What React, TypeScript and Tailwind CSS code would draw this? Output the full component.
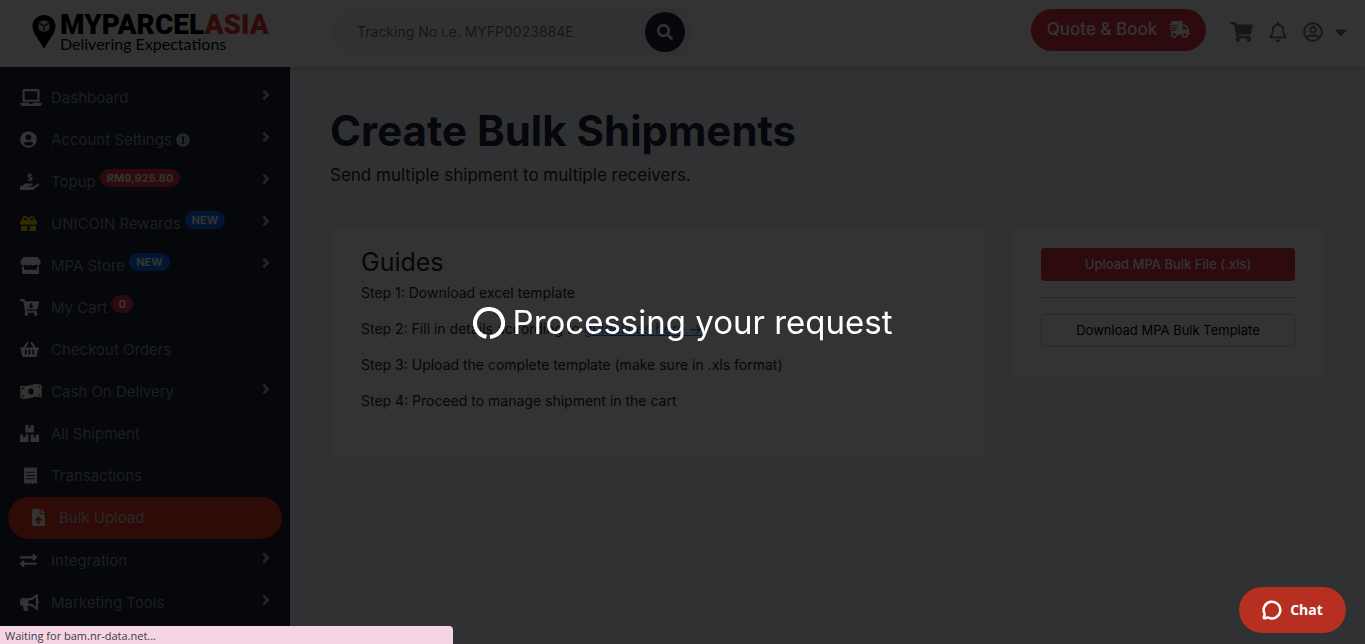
import type { ReactNode } from "react";
import clsx from "clsx";
import { MessageCircle } from "lucide-react";
import {
  FaAngleRight,
  FaBoxes,
  FaBullhorn,
  FaCaretDown,
  FaCartArrowDown,
  FaExchangeAlt,
  FaExclamationCircle,
  FaFileUpload,
  FaGift,
  FaHandHoldingUsd,
  FaLaptop,
  FaMoneyBillWave,
  FaReceipt,
  FaRegBell,
  FaRegUserCircle,
  FaSearch,
  FaShippingFast,
  FaShoppingBasket,
  FaShoppingCart,
  FaStore,
  FaUserCircle,
} from "react-icons/fa";

type MenuItem = {
  label: string;
  icon: ReactNode;
  badge?: string;
  badgeColor?: string;
  alert?: boolean;
  arrow?: boolean;
  active?: boolean;
};

const menu: MenuItem[] = [
  { label: "Dashboard", icon: <FaLaptop className="w-[22px]" />, arrow: true },
  { label: "Account Settings", icon: <FaUserCircle />, alert: true, arrow: true },
  {
    label: "Topup",
    icon: <FaHandHoldingUsd className="w-[19px]" />,
    badge: "RM9,925.80",
    badgeColor: "bg-[#dc3545]",
    arrow: true,
  },
  {
    label: "UNICOIN Rewards",
    icon: <FaGift className="text-[#ffd700]" />,
    badge: "NEW",
    badgeColor: "bg-[#0d6efd]",
    arrow: true,
  },
  {
    label: "MPA Store",
    icon: <FaStore className="w-[21px]" />,
    badge: "NEW",
    badgeColor: "bg-[#0d6efd]",
    arrow: true,
  },
  {
    label: "My Cart",
    icon: <FaCartArrowDown className="w-[19px]" />,
    badge: "0",
    badgeColor: "bg-[#dc3545]",
  },
  { label: "Checkout Orders", icon: <FaShoppingBasket className="w-[19px]" /> },
  { label: "Cash On Delivery", icon: <FaMoneyBillWave className="w-[22px]" />, arrow: true },
  { label: "All Shipment", icon: <FaBoxes className="w-[19px]" /> },
  { label: "Transactions", icon: <FaReceipt className="ml-1 w-[13px]" /> },
  { label: "Bulk Upload", icon: <FaFileUpload className="ml-1 w-[13px]" />, active: true },
  { label: "Integration", icon: <FaExchangeAlt />, arrow: true },
  { label: "Marketing Tools", icon: <FaBullhorn className="w-[19px]" />, arrow: true },
];

function Logo() {
  return (
    <a href="#" className="flex items-center gap-1 text-black">
      <svg viewBox="0 0 24 34" className="h-[34px] w-6" aria-hidden="true">
        <path
          d="M12 0C5.200 0 .5 5 .5 11.300c0 7.400 7.500 14.500 11.500 22.700 4-8.200 11.500-15.300 11.500-22.700C23.500 5 18.800 0 12 0z"
          fill="currentColor"
        />
        <path
          d="M12 5l5.500 2.500v7L12 17.500 6.500 14.500v-7z"
          fill="#ccc"
        />
        <path
          d="M6.500 8L12 10.800 17.500 8M12 10.800v6.700"
          fill="none"
          stroke="#000"
          strokeWidth="1.200"
        />
      </svg>
      <span className="flex flex-col pt-[3px]">
        <span className="font-[Roboto] text-[28px] leading-[22px] font-black">
          MYPARCEL<span className="text-[#e5382b]">ASIA</span>
        </span>
        <span className="font-[Lato] text-base leading-4">Delivering Expectations</span>
      </span>
    </a>
  );
}

function Header() {
  return (
    <header className="relative flex h-[67px] items-center bg-white pr-[18px] pb-1 pl-8 shadow-md">
      <div className="w-[301px]">
        <Logo />
      </div>
      <form className="flex h-[52px] w-[360px] items-center rounded-full bg-[#f1f5fb] pr-2 pl-6">
        <input
          type="text"
          aria-label="Tracking number"
          placeholder="Tracking No i.e. MYFP0023884E"
          className="min-w-0 flex-1 bg-transparent text-sm outline-none placeholder:text-[#6c757d]"
        />
        <button
          type="button"
          aria-label="Search"
          className="flex size-10 items-center justify-center rounded-full bg-[#192337] text-base text-white"
        >
          <FaSearch />
        </button>
      </form>
      <div className="ml-auto flex items-center gap-4 text-xl text-[#6c757d]">
        <button
          type="button"
          className="mr-2 mb-1 flex h-[42px] w-[175px] items-center justify-center gap-3 rounded-full bg-[#dc3545] text-[17px] font-medium text-white"
        >
          Quote &amp; Book
          <FaShippingFast className="w-[21px]" />
        </button>
        <a href="#" aria-label="Cart">
          <FaShoppingCart className="w-[23px]" />
        </a>
        <a href="#" aria-label="Notifications">
          <FaRegBell className="w-[18px]" />
        </a>
        <button type="button" aria-label="Account menu" className="flex items-center gap-3">
          <FaRegUserCircle />
          <FaCaretDown className="w-3" />
        </button>
      </div>
    </header>
  );
}

function Sidebar() {
  return (
    <nav className="w-[290px] shrink-0 bg-[#192337] pt-[10px]">
      <ul>
        {menu.map((item) => (
          <li key={item.label}>
            <a
              href="#"
              className={clsx(
                "flex h-[42px] items-center pr-5 pl-5 text-[15px]",
                item.active
                  ? "mx-2 mb-px rounded-full bg-[#e8382a] text-[#c3c9cf]"
                  : "text-[#8a989d]"
              )}
            >
              <span className="mb-0.5 w-[31px] text-[17px] text-white">{item.icon}</span>
              {item.label}
              {item.alert && <FaExclamationCircle className="ml-1 text-sm text-[#a9c2b8]" />}
              {item.badge && (
                <span
                  className={clsx(
                    "mb-2 ml-1 rounded-full px-[7px] text-[11px] leading-[18px] font-bold text-white",
                    item.badgeColor
                  )}
                >
                  {item.badge}
                </span>
              )}
              {item.arrow && (
                <FaAngleRight className="mb-1.5 ml-auto w-2 text-base text-[#b4bcc4]" />
              )}
            </a>
          </li>
        ))}
      </ul>
    </nav>
  );
}

function Guides() {
  return (
    <section className="col-span-8 rounded-md border border-[#dadfe5] bg-white px-[30px] pt-5 pb-[30px] text-sm leading-5 text-[#212529]">
      <h2 className="mb-[7px] text-[25px] leading-7">Guides</h2>
      <p className="mb-4">Step 1: Download excel template</p>
      <p className="mb-4">
        Step 2: Fill in details according to{" "}
        <a href="#" className="text-[#0d6efd] underline">
          guidelines here →
        </a>
      </p>
      <p className="mb-4">Step 3: Upload the complete template (make sure in .xls format)</p>
      <p className="mb-4">Step 4: Proceed to manage shipment in the cart</p>
    </section>
  );
}

function FileActions() {
  return (
    <section className="col-span-4 self-start rounded-md border border-[#dadfe5] bg-white px-[30px] pt-5 pb-[30px] text-[13px]">
      <button type="button" className="h-[33px] w-full rounded bg-[#dc3545] font-medium text-white">
        Upload MPA Bulk File (.xls)
      </button>
      <hr className="my-4 border-[#bfbfbf]" />
      <button type="button" className="h-[33px] w-full rounded border border-[#c4c8cc] text-black">
        Download MPA Bulk Template
      </button>
    </section>
  );
}

function LoadingOverlay() {
  return (
    <div
      role="status"
      className="fixed inset-0 flex items-center justify-center gap-2 bg-black/80 pt-0.5 text-[33px] text-white"
    >
      <svg viewBox="0 0 32 32" className="size-8" aria-hidden="true">
        <path
          d="M17 29.960A14 14 0 1 0 13.400 29.750"
          fill="none"
          stroke="currentColor"
          strokeWidth="4"
        />
      </svg>
      Processing your request
    </div>
  );
}

export default function App() {
  return (
    <div className="flex min-h-screen flex-col bg-[#f1f5fb] font-[Inter,sans-serif]">
      <Header />
      <div className="flex flex-1">
        <Sidebar />
        <main className="min-w-0 flex-1 pt-10 pr-[39px] pl-10">
          <h1 className="text-[42px] leading-12 font-bold text-[#192337]">
            Create Bulk Shipments
          </h1>
          <p className="mt-2 text-[17px] leading-6 text-[#212529]">
            Send multiple shipment to multiple receivers.
          </p>
          <div className="mt-10 grid grid-cols-12 gap-6">
            <Guides />
            <FileActions />
          </div>
        </main>
      </div>
      <LoadingOverlay />
      <button
        type="button"
        className="fixed right-[19px] bottom-[11px] flex h-[46px] w-[107px] items-center justify-center gap-2 rounded-full bg-[#b72f20] font-['Open_Sans',sans-serif] text-sm font-bold text-white"
      >
        <MessageCircle className="size-5" strokeWidth={3} />
        Chat
      </button>
      <div className="fixed bottom-0 left-0 h-[18px] w-[453px] rounded-tr bg-[#f5d5e3] pl-[5px] font-['Open_Sans',sans-serif] text-[11px] leading-5 text-[#3c3c3c]">
        Waiting for bam.nr-data.net...
      </div>
    </div>
  );
}
